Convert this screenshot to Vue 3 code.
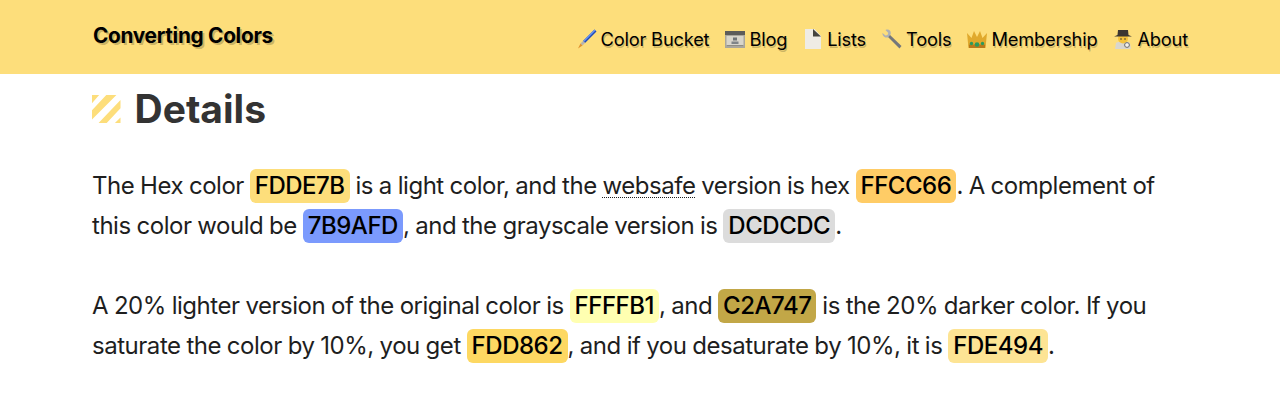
<template>
  <div class="page">
    <header class="topbar">
      <a class="brand">Converting Colors</a>
      <nav class="nav">
        <a class="nav-link">
          <svg class="ico" viewBox="0 0 20 20"><path d="M17.500 .5 19.500 2.500 8 14 6 12Z" fill="#1f49b8" /><path d="M17.500 .5 18.500 1.500 7 13 6 12Z" fill="#6a95ef" /><path d="M6 12 8 14 5.500 16.500 3.500 14.500Z" fill="#b9b4ad" /><path d="M3.500 14.500 5.500 16.500 1 19.500Z" fill="#e0912f" /></svg>
          Color Bucket
        </a>
        <a class="nav-link">
          <svg class="ico" viewBox="0 0 20 20"><rect x="0" y="2" width="20" height="17" fill="#a9a69d" /><rect x="0" y="2" width="20" height="4" fill="#5c5c5a" /><rect x="1.500" y="7" width="17" height="10.500" fill="#d8d5cb" /><rect x="8" y="8.500" width="4" height="3" fill="#6f7478" /><rect x="6.500" y="12.500" width="7" height="2.500" fill="#7f8488" /><rect x="1.500" y="16" width="17" height="1.500" fill="#8f8d85" /></svg>
          Blog
        </a>
        <a class="nav-link">
          <svg class="ico" viewBox="0 0 20 20"><path d="M2 0h9.500L18 7v13H2Z" fill="#efece5" /><path d="M10 0l8 7.500h-8Z" fill="#45443f" /></svg>
          Lists
        </a>
        <a class="nav-link">
          <svg class="ico" viewBox="0 0 20 20"><path d="M7 5 19.500 17 17.500 19.500 5 7Z" fill="#74777b" /><path d="M.5 4 3.500 6.500 5.500 6 6.300 4 3.500 1C7 -.5 9.500 2 8.500 5.500L6 8.500C3 9 0 7 .5 4Z" fill="#aeb1b5" /></svg>
          Tools
        </a>
        <a class="nav-link">
          <svg class="ico" viewBox="0 0 20 20"><path d="M0 4l4.500 5L7 2l3 6 3-6 2.500 7L20 4l-1.500 15h-17Z" fill="#e0a92c" /><path d="M1.800 15.500h16.400L18 19H2Z" fill="#b9791a" /><circle cx="10" cy="15.500" r="2.300" fill="#2b9a5c" /><circle cx="4.500" cy="14.500" r="1.700" fill="#2b9a5c" /><circle cx="15.500" cy="14.500" r="1.700" fill="#2b9a5c" /></svg>
          Membership
        </a>
        <a class="nav-link">
          <svg class="ico" viewBox="0 0 20 20"><path d="M3 14c2-2 12-2 14 0l1 6H2Z" fill="#d9d6cd" /><circle cx="10" cy="9.500" r="5" fill="#f5c33b" /><path d="M5 1h10l.5 5L19 7.500H1L4.500 6Z" fill="#3b3631" /><circle cx="8" cy="10" r=".8" fill="#3b3631" /><circle cx="12" cy="10" r=".8" fill="#3b3631" /><circle cx="14" cy="16" r="2.400" fill="#f5f3ee" stroke="#6a6a68" /></svg>
          About
        </a>
      </nav>
    </header>

    <main class="content">
      <h2 class="title">
        <svg class="stripes" viewBox="0 0 28 28">
          <path d="M0 0h7L0 8ZM14 0h10L0 24V15ZM28 5v8L14 28H6ZM28 22v6h-6Z" fill="#fdde7b" />
        </svg>
        Details
      </h2>

      <p class="para">
        The Hex color <span class="chip" style="background:#fdde7b">FDDE7B</span> is a light color, and the <span class="dotted">websafe</span> version is hex <span class="chip" style="background:#ffcc66">FFCC66</span>. A complement of this color would be <span class="chip" style="background:#7b9afd">7B9AFD</span>, and the grayscale version is <span class="chip" style="background:#dcdcdc">DCDCDC</span>.
      </p>
      <p class="para">
        A 20% lighter version of the original color is <span class="chip" style="background:#ffffb1">FFFFB1</span>, and <span class="chip" style="background:#c2a747">C2A747</span> is the 20% darker color. If you saturate the color by 10%, you get <span class="chip" style="background:#fdd862">FDD862</span>, and if you desaturate by 10%, it is <span class="chip" style="background:#fde494">FDE494</span>.
      </p>
    </main>
  </div>
</template>

<script setup>
</script>

<style>
body {
  background: #fff;
  overflow: hidden;
}
</style>

<style scoped>
.page {
  font-family: Inter, "Liberation Sans", sans-serif;
  color: #1e1e1e;
}

.topbar {
  height: 74px;
  box-sizing: border-box;
  padding: 0 92px 0 93px;
  background: #fdde7b;
  display: flex;
  justify-content: space-between;
}

.brand {
  margin-top: 23px;
  font-size: 20.8px;
  line-height: 26px;
  font-weight: 700;
  letter-spacing: -0.3px;
  color: #000;
  text-shadow: 2px 2px 0 rgba(0, 0, 0, .2);
}

.nav {
  display: flex;
  gap: 16px;
  margin-top: 27px;
}

.nav-link {
  display: flex;
  align-items: center;
  gap: 4px;
  height: 24px;
  font-size: 18.3px;
  letter-spacing: -0.2px;
  color: #000;
  text-shadow: 1px 2px 0 rgba(0, 0, 0, .2);
  white-space: nowrap;
}

.ico {
  width: 20px;
  height: 20px;
  flex: none;
}

.content {
  padding: 0 92px 0 93px;
}

.title {
  margin: 11px 0 0 -1px;
  display: flex;
  align-items: center;
  gap: 14px;
  font-size: 39px;
  line-height: 48px;
  font-weight: 700;
  color: #333;
}

.stripes {
  flex: none;
  width: 28.5px;
  height: 28.5px;
}

.para {
  margin: 0 0 40px -1px;
  font-size: 24px;
  line-height: 40px;
  letter-spacing: -0.47px;
  word-spacing: -0.45px;
}

.title + .para {
  margin-top: 33px;
}

.chip {
  display: inline-block;
  line-height: 34px;
  padding: 0 5px;
  border-radius: 6px;
  color: #000;
  font-weight: 500;
}

.dotted {
  text-decoration: underline dotted;
  text-underline-offset: 3px;
  text-decoration-thickness: 1px;
}
</style>
